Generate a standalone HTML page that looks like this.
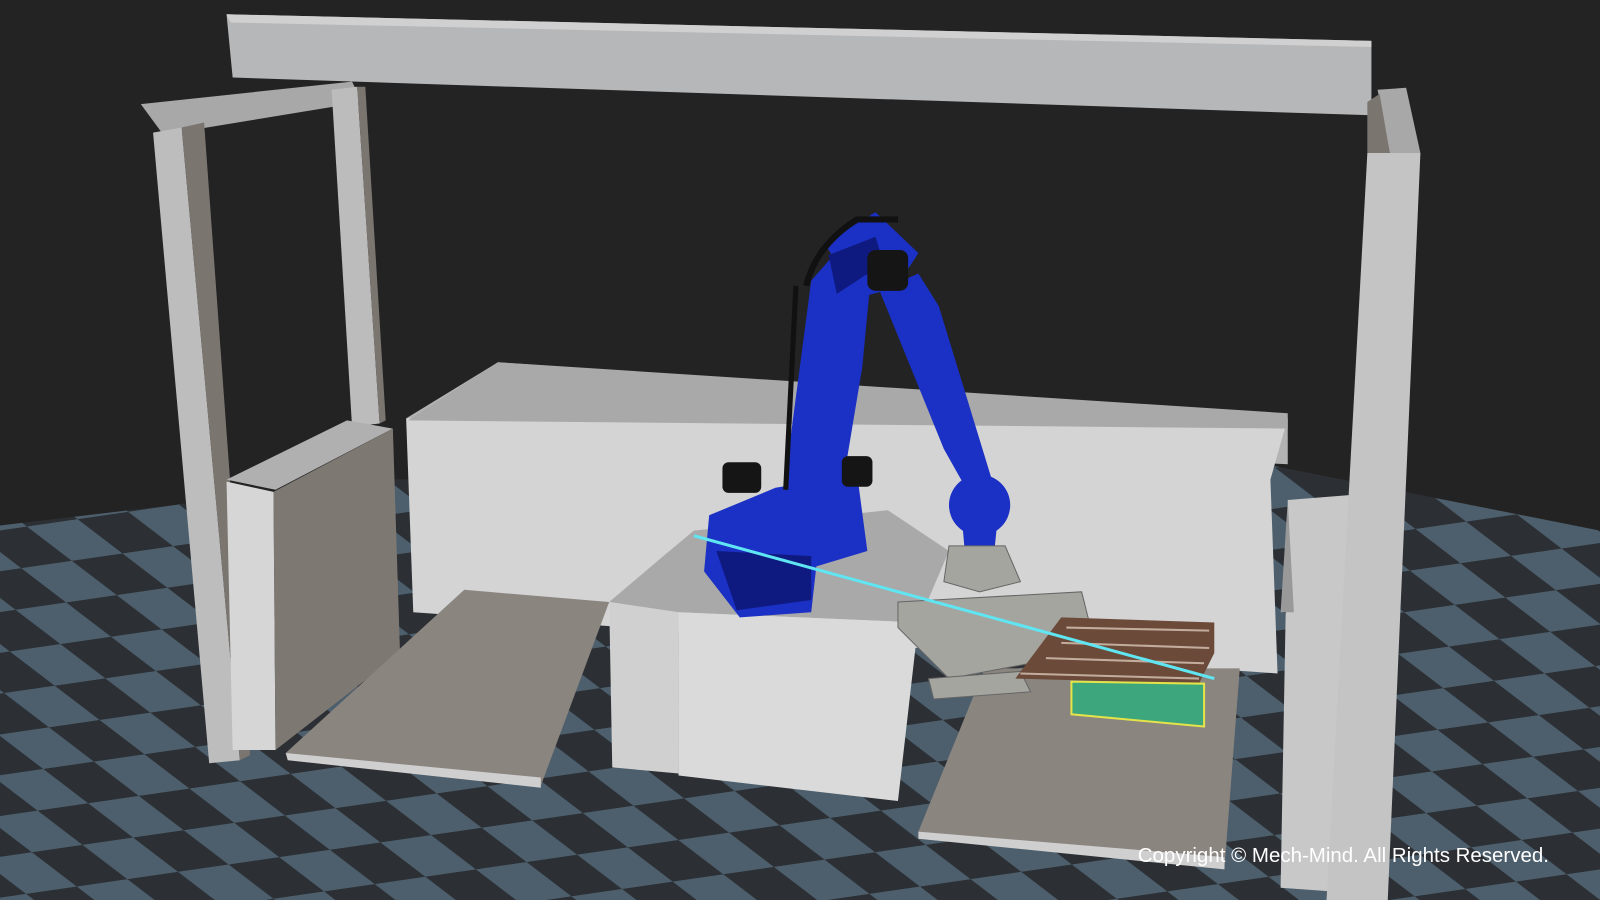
<!DOCTYPE html>
<html><head><style>
html,body{margin:0;padding:0;background:#232323;width:1600px;height:900px;overflow:hidden}
svg{display:block}
</style></head><body>
<svg width="1600" height="900" viewBox="0 0 1568 882" preserveAspectRatio="none" xmlns="http://www.w3.org/2000/svg">
<defs>
<pattern id="chk" width="160" height="160" patternUnits="userSpaceOnUse" patternTransform="matrix(0.62 -0.09 0.55 0.42 0 0)">
<rect width="160" height="160" fill="#2c3035"/>
<rect width="80" height="80" fill="#4d5f6c"/>
<rect x="80" y="80" width="80" height="80" fill="#4d5f6c"/>
</pattern>
</defs>
<rect width="1568" height="882" fill="#232323"/>
<polygon points="0,515 380,470 1240,455 1568,520 1568,882 0,882" fill="url(#chk)"/>
<!-- back wall box -->
<polygon points="398,410 488,355 1262,410 1262,455 " fill="#b3b3b3"/>
<polygon points="398,410 1262,410 1245,470 1252,660 405,600" fill="#d4d4d4"/>
<polygon points="488,355 1262,405 1262,420 400,412" fill="#a9a9a9"/>
<!-- left frame -->
<polygon points="138,102 345,80 355,100 160,132" fill="#a8a8a8"/>
<polygon points="150,130 178,125 235,745 205,748" fill="#bdbdbd"/>
<polygon points="178,125 200,120 245,740 235,745" fill="#7b7570"/>
<polygon points="325,88 350,85 372,415 345,418" fill="#bcbcbc"/>
<polygon points="350,85 358,85 378,412 372,415" fill="#7b7570"/>
<!-- left box -->
<polygon points="222,470 340,412 385,420 270,480" fill="#b0b0b0"/>
<polygon points="222,472 268,482 270,735 228,735" fill="#d6d6d6"/>
<polygon points="268,482 385,420 392,640 270,735" fill="#7e7872"/>
<!-- left slab -->
<polygon points="280,738 455,578 597,590 530,770" fill="#8b8580"/>
<polygon points="280,738 530,762 530,772 282,745" fill="#cfcfcf"/>
<!-- top beam -->
<polygon points="222,14 1344,40 1344,113 228,76" fill="#b6b7b9"/>
<polygon points="222,14 1344,40 1344,46 226,22" fill="#d0d0d0"/>
<!-- pedestal -->
<polygon points="597,590 650,545 680,520 870,500 930,540 900,610 665,600" fill="#a9a9a9"/>
<polygon points="597,590 665,600 665,758 600,752" fill="#d0d0d0"/>
<polygon points="665,600 900,610 880,785 665,760" fill="#dadada"/>
<!-- right slab -->
<polygon points="900,815 965,655 1215,655 1200,850" fill="#8b8580"/>
<polygon points="900,815 1200,840 1200,852 900,822" fill="#cfcfcf"/>
<!-- right box and post -->
<polygon points="1262,490 1325,485 1325,875 1255,870" fill="#c8c8c8"/>
<polygon points="1262,490 1268,600 1255,600" fill="#999"/>
<polygon points="1350,88 1378,86 1392,150 1362,150" fill="#a8a8a8"/>
<polygon points="1340,150 1392,150 1360,882 1300,882" fill="#c4c4c4"/>
<polygon points="1340,100 1352,92 1362,150 1340,150" fill="#7b7570"/>
<!-- robot -->
<g fill="#1b30c4">
<polygon points="695,505 760,478 840,465 850,540 800,555 795,600 725,605 690,560"/>
<polygon points="768,480 795,275 830,235 855,255 845,360 825,480 800,530"/>
<polygon points="808,238 858,208 900,248 878,282 840,292"/>
<polygon points="862,285 900,268 920,300 972,470 952,488 925,440"/>
<circle cx="960" cy="495" r="30"/>
<polygon points="942,500 978,505 975,535 945,535"/>
</g>
<g fill="#0f1a80"><polygon points="812,250 858,232 866,258 820,288"/><polygon points="702,540 795,545 795,588 722,598"/></g>
<path d="M790,280 Q800,240 840,215 L880,215" stroke="#111" stroke-width="6" fill="none"/>
<path d="M780,280 L770,480" stroke="#111" stroke-width="5" fill="none"/>
<g fill="#151515"><rect x="708" y="453" width="38" height="30" rx="6"/><rect x="825" y="447" width="30" height="30" rx="6"/><rect x="850" y="245" width="40" height="40" rx="8"/></g>
<!-- gripper -->
<g fill="#a5a5a0" stroke="#666" stroke-width="1">
<polygon points="930,535 985,535 1000,570 960,580 925,570"/>
<polygon points="880,590 1060,580 1070,620 1010,650 930,665 880,615"/>
<polygon points="910,665 1000,658 1010,678 915,685"/>
</g>
<!-- cases -->
<polygon points="1040,605 1190,610 1190,640 1175,670 995,665" fill="#6b4a3a"/>
<g stroke="#e8d8c8" stroke-width="2" opacity="0.7"><line x1="1045" y1="615" x2="1185" y2="618"/><line x1="1040" y1="630" x2="1185" y2="635"/><line x1="1025" y1="645" x2="1180" y2="650"/><line x1="1000" y1="660" x2="1175" y2="665"/></g>
<polygon points="1050,668 1180,670 1180,712 1050,700" fill="#3da67c" stroke="#e3e34a" stroke-width="2"/>
<line x1="680" y1="525" x2="1190" y2="665" stroke="#5fe6f2" stroke-width="3"/>
<text x="1115" y="845" fill="#ffffff" font-family="Liberation Sans, sans-serif" font-size="19.5" textLength="403" lengthAdjust="spacingAndGlyphs">Copyright © Mech-Mind. All Rights Reserved.</text>
</svg>
</body></html>
